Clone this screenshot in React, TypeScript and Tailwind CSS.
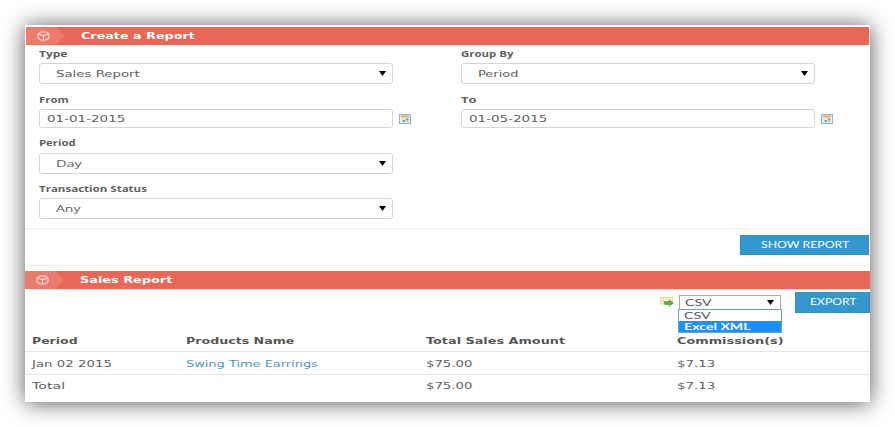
import { useLayoutEffect, useRef, useState } from "react";
import type { ReactNode } from "react";

/** Single line of text stretched horizontally to fill `w` pixels. */
function Stretch({ w, className = "", children }: { w: number; className?: string; children: ReactNode }) {
  const ref = useRef<HTMLSpanElement>(null);
  const [scale, setScale] = useState(1);
  useLayoutEffect(() => {
    if (ref.current) setScale(w / ref.current.offsetWidth);
  }, [w]);
  return (
    <span className={`block shrink-0 whitespace-nowrap ${className}`} style={{ width: w }}>
      <span ref={ref} className="inline-block origin-left" style={{ transform: `scaleX(${scale})` }}>
        {children}
      </span>
    </span>
  );
}

const verdana = "font-['DejaVu_Sans',sans-serif]";
const display = "font-['Open_Sans',sans-serif]";
const geometric = "font-['Lato',sans-serif]";

function Banner({ title, w, className }: { title: string; w: number; className: string }) {
  return (
    <div className={`flex h-[18px] items-center bg-[#e86757] ${className}`}>
      <div className="flex h-full w-[39px] items-center bg-[#eb7b6d] pl-[11px] [clip-path:polygon(0_0,30px_0,100%_50%,30px_100%,0_100%)]">
        <svg width="13" height="10" viewBox="0 0 13 10" fill="none" stroke="#fbdcd8" strokeWidth="1.1" strokeLinejoin="round">
          <path d="M4 1H9L12 2.900V7L9 9H4L1 7V2.900ZM1.200 3 6.500 4.600 11.800 3M6.500 4.600V9" />
        </svg>
      </div>
      <Stretch w={w} className={`ml-[16px] text-[9.5px] leading-[18px] font-bold text-white ${verdana}`}>
        {title}
      </Stretch>
    </div>
  );
}

function Arrow() {
  return (
    <svg className="ml-auto shrink-0" width="7" height="5" viewBox="0 0 7 5">
      <path d="M0 0H7L3.5 5Z" fill="#000" />
    </svg>
  );
}

function CalendarIcon() {
  return (
    <svg className="ml-[6px] shrink-0" width="12" height="10" viewBox="0 0 12 10">
      <rect x=".5" y=".5" width="11" height="9" fill="#e4edf4" stroke="#8fb0d0" />
      <rect x="2" y="1.500" width="8" height="2" fill="#f0a272" />
      <path d="M2 4H10" stroke="#f6d6c2" />
      <rect x="6.800" y="4.500" width="2.700" height="2" fill="#74b07c" />
      <rect x="3.500" y="6" width="2.500" height="2" fill="#74b07c" />
      <rect x="6.500" y="7" width="2" height="1" fill="#a4cca9" />
    </svg>
  );
}

function Label({ w, children }: { w: number; children: ReactNode }) {
  return (
    <Stretch w={w} className={`h-[12px] text-[9.5px] leading-[12px] font-bold text-[#606060] ${display}`}>
      {children}
    </Stretch>
  );
}

function SelectBox({ w, font = verdana, children }: { w: number; font?: string; children: ReactNode }) {
  return (
    <div className="flex h-[21px] w-[354px] items-center rounded-[3px] border border-[#d6d6d6] bg-white pr-[6px] pl-[15.5px]">
      <Stretch w={w} className={`text-[9.5px] leading-[19px] text-[#606060] ${font}`}>{children}</Stretch>
      <Arrow />
    </div>
  );
}

function DateBox({ w, children }: { w: number; children: ReactNode }) {
  return (
    <div className="flex items-center">
      <div className="flex h-[19px] w-[354px] items-center rounded-[3px] border border-[#d6d6d6] bg-white pl-[7px]">
        <Stretch w={w} className={`text-[9.5px] leading-[17px] text-[#606060] ${verdana}`}>{children}</Stretch>
      </div>
      <CalendarIcon />
    </div>
  );
}

function FolderIcon() {
  return (
    <svg className="mt-[3.500px] ml-[635px] shrink-0" width="14" height="11" viewBox="0 0 14 11">
      <path d="M.5 1.500H4L5 2.500H9V8H1Z" fill="#faf0bd" stroke="#e3cf80" strokeWidth=".8" />
      <path d="M3.500 2.500 5 1.500H12.500V7H4Z" fill="#fbf3c8" stroke="#e3cf80" strokeWidth=".8" />
      <path d="M4.500 5.500H9V3.800L13.500 7 9 10.300V8.500H4.500Z" fill="#62b045" stroke="#4c9438" strokeWidth=".5" />
    </svg>
  );
}

const th = `leading-[12px] text-[9.5px] font-bold text-[#555] ${verdana}`;
const td = `leading-[12px] text-[9.5px] text-[#606060] ${verdana}`;
const grid = "grid grid-cols-[154px_239.5px_251.5px_1fr] items-center pl-[7px]";

export default function App() {
  return (
    <div className="h-[427px] w-[895px] overflow-hidden bg-white pt-[25px] pl-[25px]">
      <div className="flex h-[377px] w-[845px] flex-col bg-white shadow-[0_1px_21px_0px_rgba(0,0,0,0.66)]">
        <Banner title="Create a Report" w={114} className="mx-px mt-[1.5px]" />

        <div className="mx-px flex h-[184px] gap-[68px] border-b border-[#f0f0f0] pt-[3.5px] pl-[13px]">
          <div className="w-[354px]">
            <Label w={29}>Type</Label>
            <div className="mt-[3px]"><SelectBox w={84}>Sales Report</SelectBox></div>
            <div className="mt-[10px]"><Label w={30}>From</Label></div>
            <div className="mt-[3px] w-[374px]"><DateBox w={78}>01-01-2015</DateBox></div>
            <div className="mt-[9px]"><Label w={37}>Period</Label></div>
            <div className="mt-[3.500px]"><SelectBox w={26} font={display}>Day</SelectBox></div>
            <div className="mt-[9.500px]"><Label w={108}>Transaction Status</Label></div>
            <div className="mt-[3px]"><SelectBox w={25} font={display}>Any</SelectBox></div>
          </div>
          <div className="w-[354px]">
            <Label w={53}>Group By</Label>
            <div className="mt-[3px]"><SelectBox w={41}>Period</SelectBox></div>
            <div className="mt-[10px]"><Label w={15}>To</Label></div>
            <div className="mt-[3px] w-[374px]"><DateBox w={78}>01-05-2015</DateBox></div>
          </div>
        </div>

        <div className="mx-px flex h-[37px] justify-end border-b border-[#f0f0f0] pt-[6px]">
          <button className="flex h-[20px] w-[129px] items-center justify-center border border-[#3090c4] bg-[#3498ce]">
            <Stretch w={88} className={`text-left text-[9.5px] leading-[18px] text-white ${geometric}`}>SHOW REPORT</Stretch>
          </button>
        </div>

        <Banner title="Sales Report" w={92} className="mt-[5.500px]" />

        <div className="flex h-[43px] items-start pt-[3px]">
          <FolderIcon />
          <div className="relative mt-[3px] ml-[5px] flex h-[15px] w-[103px] items-center border border-[#aaa] bg-white pr-[6px] pl-[5px]">
            <Stretch w={27} className={`text-[10px] leading-[13px] text-[#555] ${geometric}`}>CSV</Stretch>
            <Arrow />
            <div className="absolute top-[13px] -left-[2px] z-10 flex w-[104px] flex-col border border-[#6f9dba] bg-white">
              <div className="h-[11px] pl-[5px]">
                <Stretch w={27} className={`text-[9px] leading-[11px] text-[#555] ${geometric}`}>CSV</Stretch>
              </div>
              <div className="h-[11px] bg-[#1e90ff] pl-[5px]">
                <Stretch w={66} className={`text-[9px] leading-[11px] font-bold text-white ${geometric}`}>Excel XML</Stretch>
              </div>
            </div>
          </div>
          <button className="ml-[14px] flex h-[20.500px] w-[75px] items-center border border-[#3090c4] bg-[#3498ce] pl-[14px]">
            <Stretch w={46} className={`text-left text-[9.5px] leading-[18px] text-white ${geometric}`}>EXPORT</Stretch>
          </button>
        </div>

        <div className={`${grid} h-[20px] border-b border-[#e4e4e4] pb-[2px]`}>
          <Stretch w={46} className={th}>Period</Stretch>
          <Stretch w={109} className={th}>Products Name</Stretch>
          <Stretch w={139} className={th}>Total Sales Amount</Stretch>
          <Stretch w={107} className={th}>Commission(s)</Stretch>
        </div>
        <div className={`${grid} h-[23px] border-b border-[#e4e4e4] pt-px`}>
          <Stretch w={80} className={td}>Jan 02 2015</Stretch>
          <Stretch w={132} className={`leading-[12px] text-[9.5px] text-[#4f94c0] ${verdana}`}>Swing Time Earrings</Stretch>
          <Stretch w={46} className={td}>$75.00</Stretch>
          <Stretch w={38} className={td}>$7.13</Stretch>
        </div>
        <div className={`${grid} h-[22px]`}>
          <Stretch w={33} className={td}>Total</Stretch>
          <span />
          <Stretch w={46} className={td}>$75.00</Stretch>
          <Stretch w={38} className={td}>$7.13</Stretch>
        </div>
      </div>
    </div>
  );
}
